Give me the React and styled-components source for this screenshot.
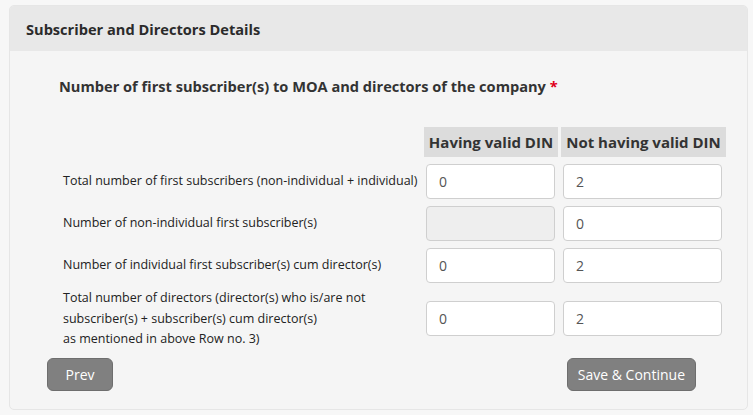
import React from "react";
import styled, { createGlobalStyle } from "styled-components";

const GlobalStyle = createGlobalStyle`
  html, body {
    margin: 0;
    padding: 0;
    background: #f7f7f7;
    font-family: "Open Sans", "Noto Sans", sans-serif;
    color: #333;
  }
`;

const rows = [
  { label: "Total number of first subscribers (non-individual + individual)", din: "0", noDin: "2" },
  { label: "Number of non-individual first subscriber(s)", din: null, noDin: "0" },
  { label: "Number of individual first subscriber(s) cum director(s)", din: "0", noDin: "2" },
  {
    label: [
      "Total number of directors (director(s) who is/are not",
      "subscriber(s) + subscriber(s) cum director(s)",
      "as mentioned in above Row no. 3)",
    ],
    din: "0",
    noDin: "2",
  },
];

export default function App() {
  return (
    <>
      <GlobalStyle />
      <Panel>
        <PanelHeader>Subscriber and Directors Details</PanelHeader>
        <PanelBody>
          <Question>
            Number of first subscriber(s) to MOA and directors of the company <Required>*</Required>
          </Question>
          <Grid>
            <span />
            <HeadCell>Having valid DIN</HeadCell>
            <HeadCell>Not having valid DIN</HeadCell>
            {rows.map((row, i) => (
              <React.Fragment key={i}>
                <Label $tall={Array.isArray(row.label)}>
                  {Array.isArray(row.label)
                    ? row.label.map((line) => <div key={line}>{line}</div>)
                    : row.label}
                </Label>
                <InputCell $tall={Array.isArray(row.label)}>
                  {row.din === null ? (
                    <Field disabled defaultValue="" />
                  ) : (
                    <Field defaultValue={row.din} />
                  )}
                </InputCell>
                <InputCell $tall={Array.isArray(row.label)} $wide>
                  <Field defaultValue={row.noDin} />
                </InputCell>
              </React.Fragment>
            ))}
          </Grid>
          <Actions>
            <Button>Prev</Button>
            <Button>Save &amp; Continue</Button>
          </Actions>
        </PanelBody>
      </Panel>
    </>
  );
}

const Panel = styled.div`
  margin: 5px 5px 5px 9px;
  border: 1px solid #e6e6e6;
  border-radius: 5px;
  background: #f5f5f5;
  overflow: hidden;
`;

const PanelHeader = styled.div`
  height: 45px;
  display: flex;
  align-items: center;
  padding-left: 16px;
  background: #e8e8e8;
  font-size: 14.6px;
  font-weight: 700;
  color: #2b2b2b;
`;

const PanelBody = styled.div`
  padding: 24px 0 18px 0;
`;

const Question = styled.div`
  padding-left: 49px;
  font-size: 14.6px;
  font-weight: 700;
  color: #333;
  line-height: 22px;
`;

const Required = styled.span`
  color: #e0001b;
`;

const Grid = styled.div`
  display: grid;
  grid-template-columns: 358px 134px 165px;
  column-gap: 3px;
  margin: 30px 0 0 53px;
  align-items: center;
`;

const HeadCell = styled.div`
  height: 30px;
  margin-bottom: 3px;
  display: flex;
  align-items: center;
  justify-content: center;
  background: #dcdcdc;
  font-size: 15px;
  font-weight: 700;
  color: #333;
`;

const Label = styled.div`
  font-size: 12.5px;
  line-height: ${(p) => (p.$tall ? "20.5px" : "16px")};
  color: #222;
  padding: ${(p) => (p.$tall ? "2px 0" : "3.5px 0")};
  white-space: nowrap;
`;

const InputCell = styled.div`
  padding: ${(p) => (p.$wide ? "3.5px 4px 3.5px 2px" : "3.5px 3px 3.5px 2px")};
  ${(p) => (p.$tall ? "padding-top: 2px; padding-bottom: 2px;" : "")}
`;

const Field = styled.input`
  box-sizing: border-box;
  width: 100%;
  height: 35px;
  padding: 0 12px;
  border: 1px solid #cfcfcf;
  border-radius: 4px;
  background: #fff;
  font-family: "Open Sans", "Noto Sans", sans-serif;
  font-size: 14px;
  color: #555;
  outline: none;
  &:disabled {
    background: #eeeeee;
  }
`;

const Actions = styled.div`
  display: flex;
  justify-content: space-between;
  padding: 6px 51px 0 37px;
`;

const Button = styled.button`
  height: 33px;
  padding: 0 10px;
  min-width: 66px;
  border: 1px solid #6e6e6e;
  border-radius: 6px;
  background: #808080;
  color: #fff;
  font-family: "Open Sans", "Noto Sans", sans-serif;
  font-size: 14px;
  cursor: pointer;
`;
